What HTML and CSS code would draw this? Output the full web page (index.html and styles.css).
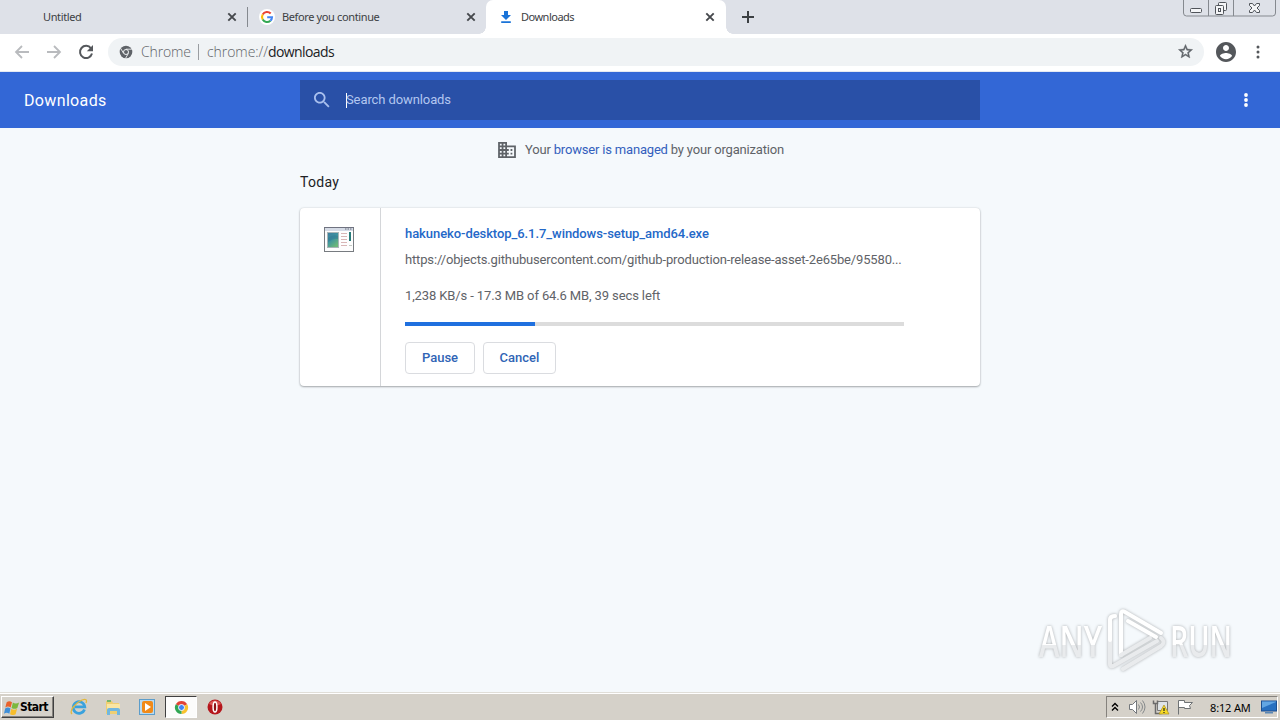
FILE: index.html
```html
<!DOCTYPE html>
<html lang="en">
<head>
    <meta charset="UTF-8">
    <title>Downloads</title>
    <link rel="stylesheet" href="styles.css">
</head>
<body>
    <div class="tabstrip">
        <div class="tab tab-first">
            <span class="tab-title">Untitled</span>
            <svg class="close" viewBox="0 0 10 10"><path d="M1.3 1.3l7.4 7.4M8.7 1.3L1.3 8.7"/></svg>
        </div>
        <div class="tab tab-second">
            <svg class="favicon" viewBox="0 0 16 16">
                <circle cx="8" cy="8" r="8" fill="#fff"/>
                <g fill="none" stroke-width="2.1">
                    <path d="M11.7 4.5A5 5 0 0 0 3.7 5.5" stroke="#ea4335"/>
                    <path d="M3.7 5.5a5 5 0 0 0 0 5" stroke="#fbbc05"/>
                    <path d="M3.7 10.5a5 5 0 0 0 7.7 1.2" stroke="#34a853"/>
                    <path d="M11.4 11.7A5 5 0 0 0 13 8.2H8.2" stroke="#4285f4"/>
                </g>
            </svg>
            <span class="tab-title">Before you continue</span>
            <svg class="close" viewBox="0 0 10 10"><path d="M1.3 1.3l7.4 7.4M8.7 1.3L1.3 8.7"/></svg>
        </div>
        <div class="tab tab-active">
            <svg class="favicon" viewBox="0 0 16 16"><path fill="#1a73d8" d="M6 2h4v4h3l-5 5-5-5h3zM3.2 12.2h9.6v1.8H3.2z"/></svg>
            <span class="tab-title">Downloads</span>
            <svg class="close" viewBox="0 0 10 10"><path d="M1.3 1.3l7.4 7.4M8.7 1.3L1.3 8.7"/></svg>
        </div>
        <svg class="new-tab" viewBox="0 0 12 12"><path d="M6 0v12M0 6h12"/></svg>
        <svg class="window-buttons" viewBox="0 0 94 18">
            <path d="M.5 0v13q0 3 3 3h86q3 0 3-3V0M25.5 0v16M50.5 0v16" stroke="#85898f"/>
            <g stroke="#50545a" fill="#f4f5f7">
                <rect x="7.5" y="8.500" width="11" height="4" rx="1"/>
                <rect x="35.5" y="2.500" width="8" height="8" rx="1"/>
                <rect x="32.5" y="5.500" width="8" height="9" rx="1"/>
                <rect x="35.5" y="8.500" width="2" height="3"/>
                <path d="M66.500 3.500h3l2 2.500 2-2.500h3v2L74 8l2.500 2.500v2h-3l-2-2.500-2 2.500h-3v-2L69 8l-2.500-2.500z"/>
            </g>
        </svg>
    </div>

    <div class="toolbar">
        <svg class="nav" viewBox="0 0 16 16"><path d="M15 8H2.500M8 2L2 8l6 6"/></svg>
        <svg class="nav" viewBox="0 0 16 16"><path d="M1 8h12.500M8 2l6 6-6 6"/></svg>
        <svg class="nav reload" viewBox="0 0 16 16"><path d="M13 4.300A6.100 6.100 0 1 0 14 9.600"/><path class="solid" d="M15 1v6.200H8.800z"/></svg>
        <div class="omnibox">
            <svg class="chrome-mark" viewBox="0 0 14 14">
                <circle cx="7" cy="7" r="6.300" fill="#5f6368"/>
                <circle cx="7" cy="7" r="2.500" fill="#5f6368" stroke="#f1f3f4" stroke-width="1"/>
                <path d="M7 4.200h5.800M4.600 8.400L1.700 3.400M9.400 8.400l-2.900 5" stroke="#f1f3f4" stroke-width=".9"/>
            </svg>
            <span class="scheme-name">Chrome</span>
            <span class="divider"></span>
            <span class="url">chrome://<b>downloads</b></span>
            <svg class="star" viewBox="0 0 24 24"><path fill="#5f6368" stroke="#5f6368" stroke-width=".6" d="M22 9.240l-7.190-.62L12 2 9.190 8.630 2 9.240l5.460 4.730L5.820 21 12 17.270 18.180 21l-1.630-7.030L22 9.240zM12 15.400l-3.760 2.270 1-4.280-3.320-2.880 4.380-.38L12 6.100l1.710 4.040 4.380.38-3.320 2.880 1 4.280L12 15.400z"/></svg>
        </div>
        <svg class="avatar" viewBox="2 2 20 20"><path fill="#54575b" d="M12 2C6.480 2 2 6.480 2 12s4.480 10 10 10 10-4.480 10-10S17.520 2 12 2zm0 3c1.660 0 3 1.340 3 3s-1.340 3-3 3-3-1.340-3-3 1.340-3 3-3zm0 14.200c-2.500 0-4.710-1.280-6-3.220.03-1.990 4-3.080 6-3.080 1.990 0 5.970 1.090 6 3.080-1.290 1.940-3.500 3.220-6 3.220z"/></svg>
        <svg class="menu" viewBox="0 0 4 14"><g fill="#54575b"><circle cx="2" cy="2" r="1.500"/><circle cx="2" cy="7" r="1.500"/><circle cx="2" cy="12" r="1.500"/></g></svg>
    </div>

    <header class="header">
        <h1>Downloads</h1>
        <div class="search">
            <svg class="search-icon" viewBox="3 3 18 18"><path fill="#a9c0ee" d="M15.500 14h-.79l-.28-.27C15.410 12.590 16 11.110 16 9.500 16 5.910 13.090 3 9.500 3S3 5.910 3 9.500 5.910 16 9.500 16c1.610 0 3.090-.59 4.230-1.570l.27.28v.79l5 4.990L20.490 19l-4.990-5zm-6 0C7.010 14 5 11.990 5 9.500S7.010 5 9.500 5 14 7.010 14 9.500 11.990 14 9.500 14z"/></svg>
            <span class="caret"></span>
            <span class="placeholder">Search downloads</span>
        </div>
        <svg class="header-menu" viewBox="0 0 4 14"><g fill="#fff"><circle cx="2" cy="2" r="1.900"/><circle cx="2" cy="7" r="1.900"/><circle cx="2" cy="12" r="1.900"/></g></svg>
    </header>

    <main class="content">
        <div class="managed">
            <svg viewBox="2 3 20 18"><path fill="#5f6368" d="M12 7V3H2v18h20V7H12zM6 19H4v-2h2v2zm0-4H4v-2h2v2zm0-4H4V9h2v2zm0-4H4V5h2v2zm4 12H8v-2h2v2zm0-4H8v-2h2v2zm0-4H8V9h2v2zm0-4H8V5h2v2zm10 12h-8v-2h2v-2h-2v-2h2v-2h-2V9h8v10zm-2-8h-2v2h2v-2zm0 4h-2v2h2v-2z"/></svg>
            <span>Your <a>browser is managed</a> by your organization</span>
        </div>
        <h2>Today</h2>
        <div class="card">
            <div class="card-icon">
                <svg viewBox="0 0 32 26">
                    <defs>
                        <linearGradient id="pic" x2="0.6" y2="1"><stop stop-color="#3e7c9e"/><stop offset=".5" stop-color="#3d93a0"/><stop offset="1" stop-color="#6cb878"/></linearGradient>
                    </defs>
                    <rect x="1.500" y=".5" width="29" height="24" fill="#fdfdfd" stroke="#777b80"/>
                    <path d="M2 1h28v3H2z" fill="#d5dbe6"/>
                    <path d="M1 .5h30" stroke="#6f7280"/>
                    <path d="M22 2h1.500m1 0h1.500m1 0h1.500" stroke="#656b7a"/>
                    <rect x="4.500" y="5.500" width="11" height="15" fill="url(#pic)" stroke="#a9b5b7"/>
                    <path d="M5 11q5-4 10-2v3q-5-1-10 3z" fill="#2f7691" opacity=".5"/>
                    <path d="M18 6.500h6m-6 3h6m-6 3h6m-6 3h6m-6 3h6" stroke="#d8b6b6"/>
                    <path d="M27 5v9" stroke="#287b79" stroke-width="2"/>
                    <path d="M26 18.500h3" stroke="#c3c9c3"/>
                </svg>
            </div>
            <div class="card-body">
                <div class="file-name">hakuneko-desktop_6.1.7_windows-setup_amd64.exe</div>
                <div class="file-url">https://objects.githubusercontent.com/github-production-release-asset-2e65be/95580...</div>
                <div class="status">1,238 KB/s - 17.3 MB of 64.6 MB, 39 secs left</div>
                <div class="progress"><div class="progress-value" style="width: 26%"></div></div>
                <div class="actions">
                    <button class="pause">Pause</button>
                    <button class="cancel">Cancel</button>
                </div>
            </div>
        </div>
    </main>

    <svg class="watermark" viewBox="0 0 210 80">
        <defs>
            <linearGradient id="fade" x2="0" y2="1"><stop offset=".58" stop-color="#fff"/><stop offset=".58" stop-color="#e9ebed"/></linearGradient>
        </defs>
        <g class="watermark-text" fill="url(#fade)">
            <text x="9" y="55" textLength="63" lengthAdjust="spacingAndGlyphs">ANY</text>
            <text x="140" y="55" textLength="62" lengthAdjust="spacingAndGlyphs">RUN</text>
        </g>
        <g fill="none" stroke-width="4" stroke-linecap="round">
            <path d="M85 14q-5 0-5 4v44q0 4 5 1l42-24" stroke="#e9ebed"/>
            <path d="M91 53V12q0-4 4-2l36 21" stroke="#fff"/>
            <path d="M91 53l29-17M93 67l38-23q5-4 0-8" stroke="#e9ebed"/>
            <path d="M85 14q-5 0-5 4v20M98 19l28 16" stroke="#fff"/>
        </g>
    </svg>

    <footer class="taskbar">
        <div class="start">
            <svg viewBox="0 0 18 16">
                <path d="M3 2q3-2 6 0L7.500 8q-3-2-6 0z" fill="#e9622b"/>
                <path d="M10 2.500q3 2 7 0L15 8.500q-3 2-6.500 0z" fill="#7cb83c"/>
                <path d="M1.300 9q3-2 6 0L6 15q-3-2-6 0z" fill="#3f8fd8"/>
                <path d="M8.200 9.500q3 2 6.500 0l-1.600 6q-3 2-6.300 0z" fill="#f6bd2b"/>
            </svg>
            <span>Start</span>
        </div>
        <div class="launchers">
            <svg viewBox="0 0 18 18">
                <path d="M14.500 11.500A5.800 5.800 0 1 1 14.800 8.800H5" fill="none" stroke="#3aa2dd" stroke-width="2.700"/>
                <path d="M2 16C-1 13 5 5 12 2q6-2 4 3" fill="none" stroke="#e2b83d" stroke-width="1.300"/>
            </svg>
            <svg viewBox="0 0 18 18">
                <path d="M2 3h6l1 2h6v11H2z" fill="#efcf72"/>
                <path d="M3 2h4v2H3z" fill="#75b66c"/><path d="M3 6h13v5H3z" fill="#f9e6a3"/>
                <path d="M3 17v-5q0-2 2-2h9q2 0 2 2v5h-3v-4H6v4z" fill="#71b7df"/>
            </svg>
            <svg viewBox="0 0 18 18">
                <rect x="1.500" y="1.500" width="15" height="15" fill="#b9daf0" stroke="#5c9dca"/>
                <rect x="4" y="3" width="11" height="12" rx="2" fill="#f18a18"/><path d="M7 5l6 4-6 4z" fill="#fff"/>
            </svg>
            <div class="running">
                <svg viewBox="0 0 16 16">
                    <path d="M8 8L1.900 4.500A7 7 0 0 1 14.100 4.500z" fill="#e34335"/>
                    <path d="M8 8l6.100-3.500A7 7 0 0 1 8 15z" fill="#f9c22d"/>
                    <path d="M8 8v7A7 7 0 0 1 1.900 4.500z" fill="#30a653"/>
                    <circle cx="8" cy="8" r="3.200" fill="#4285f4" stroke="#fff" stroke-width="1"/>
                </svg>
            </div>
            <svg viewBox="0 0 18 18">
                <circle cx="9" cy="9" r="7.500" fill="#b5161c"/><path d="M3 6a7 7 0 0 1 12 0q-6 3-12 0z" fill="#dc5757"/>
                <ellipse cx="9" cy="9" rx="1.900" ry="5" fill="#8d1015" stroke="#fff" stroke-width="1.500"/>
            </svg>
        </div>
        <div class="tray">
            <svg class="chevrons" viewBox="0 0 8 10"><path d="M1 4.500L4 1.500l3 3M1 8.500l3-3 3 3" fill="none" stroke="#000" stroke-width="1.400"/></svg>
            <svg class="speaker" viewBox="0 0 18 16"><path d="M1.500 5.500h3l4-4v13l-4-4h-3z" fill="#fff" stroke="#73777b"/><path d="M10.500 5.500q2 2.500 0 5M12.500 3.500q4 4.500 0 9M14.500 1.500q5 6.500 0 13" fill="none" stroke="#85898b"/></svg>
            <svg class="network" viewBox="0 0 18 16">
                <path d="M5.500 2.500h10v9h-10z" fill="#dfe4e7" stroke="#777"/>
                <path d="M1.500 1.500v3h4v-3M3.500 5v9.500h6" fill="none" stroke="#6b6b6b" stroke-width="1.500"/>
                <path d="M12 6l5 9H7z" fill="#f7db24" stroke="#aa8d1d" stroke-width=".7"/><path d="M12 9v3m0 1v1" stroke="#222" stroke-width="1.200"/>
            </svg>
            <svg class="flag" viewBox="0 0 16 16"><path d="M1.500 15.500V1.500M1.500 1.500h6v2h8l-3 3 1 3H7.500v-1h-6" fill="#fff" stroke="#6f7375"/></svg>
            <span class="clock">8:12 AM</span>
            <svg class="desktop" viewBox="0 0 16 14"><rect x=".5" y="1" width="15" height="10" fill="#2870c0" stroke="#1c4f91"/><path d="M1 8L15 2v-.5H1z" fill="#62a6e3"/><path d="M4 12h8v1.500H4z" fill="#5a87b5"/></svg>
        </div>
    </footer>
</body>
</html>
```
FILE: styles.css
```css
* {
    box-sizing: border-box;
}

body {
    margin: 0;
    width: 1280px;
    height: 720px;
    overflow: hidden;
    display: flex;
    flex-direction: column;
    background-color: #f5f9fc;
    font-family: Roboto, sans-serif;
    font-size: 13px;
    color: #5f6368;
}

svg {
    display: block;
    flex: none;
}

.tabstrip {
    height: 34px;
    flex: none;
    display: flex;
    background-color: #dee1e8;
    font-family: "Noto Sans", sans-serif;
    font-size: 11px;
    letter-spacing: -0.370px;
    color: #3c4043;
}

.tab {
    height: 34px;
    display: flex;
    align-items: center;
    position: relative;
}

.tab-title {
    flex: 1;
    padding-bottom: 2px;
    white-space: nowrap;
}

.tab-first {
    width: 248px;
    padding: 0 11px 0 43px;
    background: linear-gradient(#85898f, #85898f) right 7px / 1px 20px no-repeat;
}

.tab-second {
    width: 238px;
    padding: 0 10px 0 11px;
}

.tab-active {
    width: 240px;
    padding: 0 11px 0 12px;
    background-color: #fff;
    border-radius: 7px 7px 0 0;
}

.tab-active .tab-title {
    letter-spacing: -0.500px;
}

/* curved feet of the selected tab */
.tab-active::before,
.tab-active::after {
    content: "";
    position: absolute;
    bottom: 0;
    width: 7px;
    height: 7px;
}

.tab-active::before {
    left: -7px;
    background: radial-gradient(circle at 0 0, transparent 6.5px, #fff 7px);
}

.tab-active::after {
    right: -7px;
    background: radial-gradient(circle at 100% 0, transparent 6.5px, #fff 7px);
}

.favicon {
    width: 16px;
    height: 16px;
    margin-right: 7px;
}

.close {
    width: 10px;
    height: 10px;
    fill: none;
    stroke: #45484c;
    stroke-width: 1.9;
}

.new-tab {
    width: 12px;
    height: 12px;
    margin: 11px 0 0 16px;
    stroke: #3c4043;
    stroke-width: 2;
}

.window-buttons {
    width: 94px;
    height: 18px;
    margin: 0 3px 0 auto;
    fill: none;
}

.toolbar {
    height: 38px;
    flex: none;
    display: flex;
    align-items: center;
    padding: 0 20px 2px 14px;
    background-color: #fff;
    border-bottom: 1px solid #e4e9f2;
}

.nav {
    width: 16px;
    height: 16px;
    margin-right: 16px;
    fill: none;
    stroke: #b9bbbe;
    stroke-width: 1.8;
}

.reload {
    margin-right: 14px;
    stroke: #55585c;
    stroke-width: 2;
}

.solid {
    fill: #55585c;
    stroke: none;
}

.omnibox {
    width: 1096px;
    height: 28px;
    display: flex;
    align-items: center;
    padding: 0 10px 0 11px;
    border-radius: 14px;
    background-color: #f0f3f5;
    font-family: "Open Sans", sans-serif;
    font-size: 14px;
    font-weight: 300;
}

.chrome-mark {
    width: 14px;
    height: 14px;
}

.scheme-name {
    margin-left: 8px;
    width: 50px;
    letter-spacing: -0.150px;
}

.divider {
    width: 1px;
    height: 16px;
    margin: 0 8px 0 7px;
    background-color: #9a9da1;
}

.url {
    flex: 1;
    letter-spacing: -0.050px;
}

.url b {
    font-weight: 400;
    letter-spacing: -0.600px;
    color: #202124;
}

.star {
    width: 17px;
    height: 17px;
}

.avatar {
    width: 20px;
    height: 20px;
    margin-left: 12px;
}

.menu {
    width: 4px;
    height: 14px;
    margin-left: auto;
}

.header {
    height: 56px;
    flex: none;
    display: flex;
    align-items: center;
    padding-right: 32px;
    background-color: #3367d6;
    color: #fff;
}

.header h1 {
    width: 300px;
    margin: 0;
    padding-left: 24px;
    font-size: 16px;
    font-weight: 400;
    letter-spacing: 0.350px;
}

.search {
    width: 680px;
    height: 40px;
    display: flex;
    align-items: center;
    padding-left: 14px;
    background-color: #2950a7;
    color: #b3c7f0;
}

.search-icon {
    width: 16px;
    height: 16px;
}

.caret {
    width: 1px;
    height: 15px;
    margin: 1px -1px 0 16px;
    background-color: #fff;
}

.placeholder {
    padding-bottom: 2px;
    letter-spacing: -0.100px;
}

.header-menu {
    width: 4px;
    height: 14px;
    margin-left: auto;
}

.content {
    width: 680px;
    flex: 1;
    margin: 0 auto;
}

.managed {
    height: 44px;
    display: flex;
    align-items: center;
    justify-content: center;
    gap: 9px;
    padding-left: 2px;
    letter-spacing: -0.185px;
}

.managed svg {
    width: 18px;
    height: 16px;
}

.managed span {
    padding-bottom: 2px;
}

.managed a {
    color: #3360bd;
}

.content h2 {
    height: 20px;
    margin: 0 0 16px;
    line-height: 21px;
    font-size: 14px;
    font-weight: 400;
    letter-spacing: 0.300px;
    color: #202124;
}

.card {
    height: 178px;
    display: flex;
    background-color: #fff;
    border-radius: 4px;
    box-shadow: 0 1px 2px rgba(60, 64, 67, 0.4), 0 0 2px rgba(60, 64, 67, 0.2);
}

.card-icon {
    width: 81px;
    padding: 19px 0 0 23px;
    border-right: 1px solid #d4d6d9;
}

.card-icon svg {
    width: 32px;
    height: 26px;
}

.card-body {
    width: 523px;
    padding: 16px 0 0 24px;
    line-height: 20px;
    white-space: nowrap;
}

.file-name {
    font-weight: 500;
    letter-spacing: -0.070px;
    color: #2468c8;
}

.file-url {
    margin-top: 6px;
    letter-spacing: -0.152px;
}

.status {
    margin-top: 16px;
    letter-spacing: -0.120px;
}

.progress {
    height: 4px;
    margin-top: 16px;
    background-color: #dcdcdc;
}

.progress-value {
    height: 4px;
    background-color: #1f70df;
}

.actions {
    display: flex;
    gap: 8px;
    margin-top: 16px;
}

.actions button {
    height: 32px;
    padding: 0 0 2px;
    border: 1px solid #dadce0;
    border-radius: 4px;
    background-color: #fff;
    font: 500 13px Roboto, sans-serif;
    color: #3064b5;
}

.pause {
    width: 70px;
}

.cancel {
    width: 73px;
}

.watermark {
    position: absolute;
    left: 1030px;
    top: 602px;
    width: 210px;
    height: 80px;
    filter: drop-shadow(0 0 1.5px rgba(0, 0, 0, 0.3));
}

.watermark-text {
    font-family: "Open Sans", sans-serif;
    font-size: 43px;
    font-weight: 600;
}

.taskbar {
    height: 28px;
    flex: none;
    display: flex;
    align-items: center;
    padding: 1px 2px 0 1px;
    background-color: #d5d1c9;
    border-top: 1px solid #e0ded8;
    box-shadow: inset 0 1px #fff;
}

.start {
    width: 53px;
    height: 22px;
    display: flex;
    align-items: center;
    padding-left: 2px;
    border: 1px solid;
    border-color: #fff #404040 #404040 #fff;
    box-shadow: inset -1px -1px #85827d;
    font: bold 12px "DejaVu Sans Condensed", sans-serif;
    letter-spacing: -0.600px;
    color: #000;
}

.start svg {
    width: 16px;
    height: 15px;
}

.launchers {
    display: flex;
    align-items: center;
    padding-left: 16px;
    gap: 16px;
}

.launchers svg {
    width: 18px;
    height: 18px;
}

.running {
    width: 32px;
    height: 22px;
    display: flex;
    align-items: center;
    justify-content: center;
    margin: 0 -7px;
    border: 1px solid;
    border-color: #404040 #fff #fff #404040;
    background-color: #fcfcfb;
}

.running svg {
    width: 15px;
    height: 15px;
}

.tray {
    width: 172px;
    height: 22px;
    display: flex;
    align-items: center;
    margin-left: auto;
    padding-left: 4px;
    border: 1px solid;
    border-color: #85827d #fff #fff #85827d;
    color: #000;
}

.chevrons {
    width: 8px;
    height: 10px;
}

.speaker {
    width: 18px;
    height: 16px;
    margin-left: 9px;
}

.network {
    width: 18px;
    height: 16px;
    margin-left: 6px;
}

.flag {
    width: 16px;
    height: 16px;
    margin-left: 7px;
}

.clock {
    width: 51px;
    margin-left: 17px;
    font: 11px "Noto Sans", sans-serif;
    letter-spacing: -0.150px;
    white-space: nowrap;
}

.desktop {
    width: 16px;
    height: 14px;
}
```
